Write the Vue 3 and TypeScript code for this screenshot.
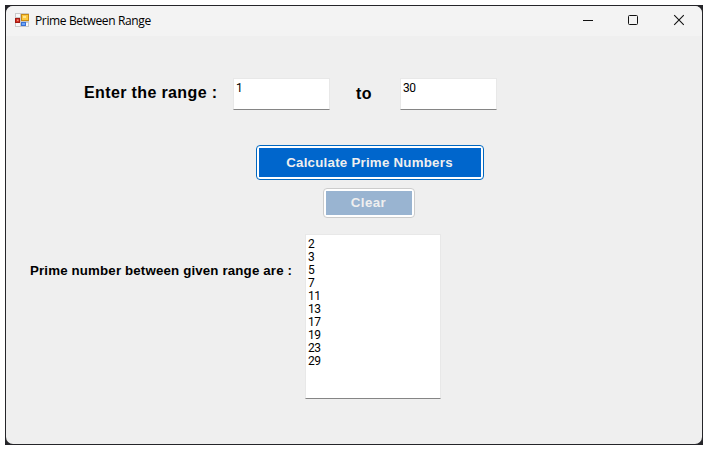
<script setup lang="ts">
import { ref, computed } from 'vue'

const from = ref<string>('1')
const to = ref<string>('30')

function isPrime(n: number): boolean {
  if (n < 2) return false
  for (let i = 2; i * i <= n; i++) if (n % i === 0) return false
  return true
}

const primes = computed<number[]>(() => {
  const out: number[] = []
  for (let n = Number(from.value); n <= Number(to.value); n++) if (isPrime(n)) out.push(n)
  return out
})
</script>

<template>
  <div class="desktop">
    <main class="window">
      <header class="titlebar">
        <svg class="app-icon" width="14" height="14" viewBox="0 0 14 14">
          <rect width="14" height="14" fill="#c9c9c9" />
          <path d="M1 1h4v3H1zM1 10h4v3H1zM11 10h2v3h-2z" fill="#f8f8f8" />
          <rect x="0.5" y="5.5" width="4" height="4" fill="#d42e22" stroke="#a01a12" />
          <rect x="2" y="6.5" width="1.5" height="1.5" fill="#f39080" />
          <rect x="6.5" y="1.5" width="7" height="6" fill="#fbc83c" stroke="#c88a14" />
          <rect x="8" y="3" width="3" height="2" fill="#ffe48e" />
          <rect x="6.5" y="9.5" width="4" height="3" fill="#6ba6f8" stroke="#3b70d4" />
        </svg>
        <span class="title">Prime Between Range</span>
        <svg class="controls" width="102" height="12" viewBox="0 0 102 12" fill="none" stroke="#111">
          <path d="M0 6.5h10" />
          <rect x="45.5" y="1.5" width="9" height="9" rx="1" />
          <path d="M91.2 1.2l9.6 9.6M100.8 1.2l-9.6 9.6" stroke-width="1.1" />
        </svg>
      </header>
      <section class="range">
        <span class="label enter">Enter the range :</span>
        <div class="field">{{ from }}</div>
        <span class="label to">to</span>
        <div class="field">{{ to }}</div>
      </section>
      <section class="actions">
        <button class="btn calculate"><span>Calculate Prime Numbers</span></button>
        <button class="btn clear"><span>Clear</span></button>
      </section>
      <section class="result">
        <span class="label caption">Prime number between given range are :</span>
        <div class="field list">
          <div v-for="p in primes" :key="p">{{ p }}</div>
        </div>
      </section>
    </main>
  </div>
</template>

<style>
body {
  margin: 0;
  background: #fff;
}
</style>

<style scoped>
.desktop {
  box-sizing: border-box;
  width: 698px;
  height: 440px;
  margin: 5px;
  padding: 1px;
  background: #252529;
}
.window {
  width: 696px;
  height: 438px;
  border-radius: 7px;
  overflow: hidden;
  background: #efefef;
  color: #000;
}
.titlebar {
  display: flex;
  align-items: center;
  height: 30px;
  background: #f3f3f3;
  padding: 0 17px 0 9px;
}
.app-icon {
  display: block;
  margin-top: -2px;
}
.title {
  margin-left: 6px;
  font: 12px/16px "Open Sans", sans-serif;
  letter-spacing: -0.37px;
  white-space: nowrap;
}
.controls {
  margin-left: auto;
  margin-top: -2px;
}
.label {
  font-family: "Liberation Sans", Arial, sans-serif;
  font-weight: bold;
  white-space: nowrap;
}
.range {
  display: flex;
  height: 33px;
  margin-top: 42px;
  padding-left: 78px;
}
.enter {
  width: 149px;
  font-size: 16px;
  line-height: 30px;
  letter-spacing: 0.37px;
}
.to {
  width: 70px;
  text-align: center;
  text-indent: -2px;
  font-size: 16px;
  line-height: 31px;
  letter-spacing: 0.5px;
}
.field {
  box-sizing: border-box;
  width: 97px;
  height: 32px;
  padding: 3px 2px 0;
  border: 1px solid #e8e8e8;
  border-bottom-color: #858585;
  background: #fff;
  font: 12px/13px Roboto, sans-serif;
  letter-spacing: -0.6px;
}
.actions {
  display: flex;
  flex-direction: column;
  margin-top: 34px;
}
.btn {
  box-sizing: border-box;
  display: flex;
  padding: 2px;
  border: 1px solid #0067c0;
  border-radius: 4px;
  background: #fff;
  color: #efefef;
  font: bold 13.3px "Liberation Sans", Arial, sans-serif;
}
.btn span {
  flex: 1;
  background: #0066cc;
  text-align: center;
  text-indent: -1px;
  white-space: nowrap;
}
.calculate {
  width: 228px;
  height: 35px;
  margin-left: 250px;
  letter-spacing: 0.24px;
}
.calculate span {
  line-height: 29px;
}
.clear {
  width: 92px;
  height: 30px;
  margin: 8px 0 0 317px;
  border-color: #ccc;
  letter-spacing: 0.4px;
}
.clear span {
  background: #99b4d1;
  line-height: 24px;
}
.result {
  display: flex;
  margin-top: 16px;
  padding-left: 24px;
}
.caption {
  width: 275px;
  font-size: 13.3px;
  line-height: 74px;
  letter-spacing: 0.15px;
}
.list {
  width: 136px;
  height: 165px;
}
</style>
